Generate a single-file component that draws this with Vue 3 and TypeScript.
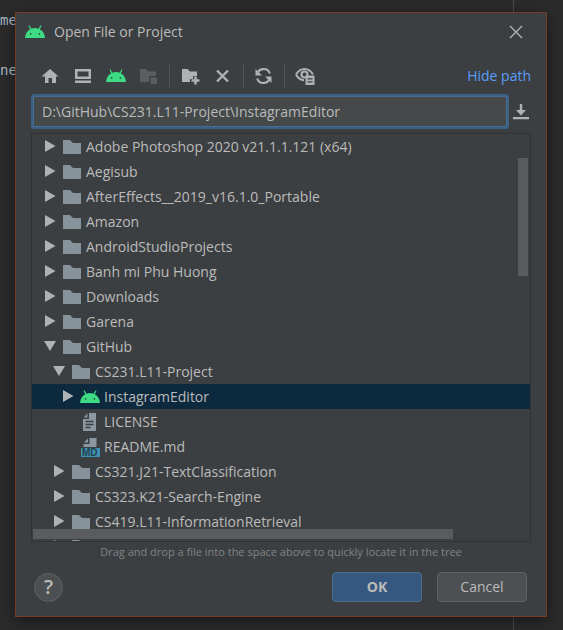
<script setup lang="ts">
import { ref } from 'vue'

type Kind = 'folder' | 'android' | 'text' | 'markdown'

interface Entry {
  name: string
  depth: number
  kind: Kind
  state?: 'open' | 'closed'
}

const path = ref('D:\\GitHub\\CS231.L11-Project\\InstagramEditor')
const selected = ref('InstagramEditor')

const folder = (name: string, depth = 0, state: 'open' | 'closed' = 'closed'): Entry => ({
  name,
  depth,
  kind: 'folder',
  state,
})

const entries: Entry[] = [
  folder('Adobe Photoshop 2020 v21.1.1.121 (x64)'),
  folder('Aegisub'),
  folder('AfterEffects__2019_v16.1.0_Portable'),
  folder('Amazon'),
  folder('AndroidStudioProjects'),
  folder('Banh mi Phu Huong'),
  folder('Downloads'),
  folder('Garena'),
  folder('GitHub', 0, 'open'),
  folder('CS231.L11-Project', 1, 'open'),
  { name: 'InstagramEditor', depth: 2, kind: 'android', state: 'closed' },
  { name: 'LICENSE', depth: 2, kind: 'text' },
  { name: 'README.md', depth: 2, kind: 'markdown' },
  folder('CS321.J21-TextClassification', 1),
  folder('CS323.K21-Search-Engine', 1),
  folder('CS419.L11-InformationRetrieval', 1),
  folder('', 1),
]
</script>

<template>
  <div class="desktop">
    <svg class="defs" aria-hidden="true">
      <symbol id="android" viewBox="0 0 20 14">
        <path d="M4.2 1 6 4.4M15.8 1 14 4.4" stroke="#3ddc84" stroke-width="1.2" stroke-linecap="round" />
        <path d="M0 13C.4 7.3 4.600 3 10 3s9.600 4.300 10 10z" fill="#3ddc84" />
        <circle cx="5.600" cy="8.800" r=".9" fill="#2b4a3b" />
        <circle cx="14.400" cy="8.800" r=".9" fill="#2b4a3b" />
      </symbol>
      <symbol id="folder" viewBox="0 0 18 15">
        <path d="M0 1h7l3 3h8v11H0z" fill="#87939a" />
      </symbol>
    </svg>

    <pre class="code">me

ne</pre>

    <main class="dialog" role="dialog" aria-labelledby="dialog-title">
      <header class="titlebar">
        <svg class="logo" width="20" height="14"><use href="#android" /></svg>
        <h1 id="dialog-title">Open File or Project</h1>
        <button class="close" type="button" aria-label="Close">
          <svg width="14" height="14" viewBox="0 0 14 14"><path d="m1 1 12 12M13 1 1 13" stroke="#b4b6b8" stroke-width="1.3" /></svg>
        </button>
      </header>

      <div class="toolbar">
        <button type="button" aria-label="Home">
          <svg width="20" height="20" viewBox="0 0 20 20"><path d="m10 3 8.500 7.500H16V17h-4v-5H8.500v5H5v-6.500H1.500z" fill="#afb1b3" /></svg>
        </button>
        <button type="button" aria-label="Desktop">
          <svg width="20" height="20" viewBox="0 0 20 20"><path fill-rule="evenodd" d="M2 3h16v10H2zm2.500 2.500v5h11v-5zM2 14.500h16V17H2z" fill="#afb1b3" /></svg>
        </button>
        <button type="button" aria-label="Project directory">
          <svg width="20" height="14"><use href="#android" /></svg>
        </button>
        <button type="button" aria-label="Module directory" disabled>
          <svg width="20" height="20" viewBox="0 0 20 20"><path d="M1 3h6l2.500 2.500H17V10h-7v6H1zM11.500 11.500H18V18h-6.500z" fill="#5b5d5f" /></svg>
        </button>
        <span class="separator"></span>
        <button type="button" aria-label="New folder">
          <svg width="20" height="20" viewBox="0 0 20 20"><path d="M2 3h5.500L10 5.500h7V10h-4v3h-3v3H2z" fill="#afb1b3" /><path d="M15.500 10.500v8M11.500 14.500h8" stroke="#afb1b3" stroke-width="2.500" /></svg>
        </button>
        <button type="button" aria-label="Delete">
          <svg width="20" height="20" viewBox="0 0 20 20"><path d="m4 4.500 11 11m0-11-11 11" stroke="#afb1b3" stroke-width="2.400" /></svg>
        </button>
        <span class="separator"></span>
        <button type="button" aria-label="Refresh">
          <svg width="20" height="20" viewBox="0 0 20 20"><path d="M3.200 8.500a6.500 6.500 0 0 1 12.600-1M15.800 11.500A6.500 6.500 0 0 1 3.200 12.500" fill="none" stroke="#afb1b3" stroke-width="2.200" /><path d="M1.500 3v6.500H8zM17.500 17v-6.500H11z" fill="#afb1b3" /></svg>
        </button>
        <span class="separator"></span>
        <button type="button" aria-label="Show hidden files">
          <svg width="20" height="20" viewBox="0 0 20 20"><path d="M1 8.500C3 5 6 3 9.500 3S16 5 18 8.500M1 8.500C2.800 12 5.500 14 9 14.200" fill="none" stroke="#afb1b3" stroke-width="2" /><circle cx="9.500" cy="8.500" r="3" fill="none" stroke="#afb1b3" stroke-width="2.200" /><path d="M10.500 9.500h9V19h-9z" fill="#afb1b3" /><path d="M12.500 12.800h5m-5 3h5" stroke="#3c3f41" stroke-width="1.300" /></svg>
        </button>
        <a class="hide-path" href="#path">Hide path</a>
      </div>

      <div class="path-row">
        <input id="path" v-model="path" type="text" aria-label="Path" spellcheck="false" />
        <button type="button" aria-label="Path history">
          <svg width="16" height="16" viewBox="0 0 16 16"><path d="M6.800 0h2.400v6H13l-5 5.500L3 6h3.800zM0 13h16v2.300H0z" fill="#afb1b3" /></svg>
        </button>
      </div>

      <section class="tree">
        <ul role="tree" aria-label="Files">
          <li
            v-for="entry in entries"
            :key="entry.name"
            role="treeitem"
            :class="['row', 'depth-' + entry.depth, { selected: entry.name === selected }]"
            :aria-selected="entry.name === selected"
            @click="selected = entry.name"
          >
            <span class="arrow">
              <svg v-if="entry.state === 'closed'" width="12" height="12" viewBox="0 0 12 12"><path d="M1 0 11.500 6 1 12z" fill="#afb1b3" /></svg>
              <svg v-else-if="entry.state === 'open'" width="12" height="12" viewBox="0 0 12 12"><path d="M0 1h12L6 11z" fill="#afb1b3" /></svg>
            </span>
            <span class="icon">
              <svg v-if="entry.kind === 'folder'" width="18" height="15"><use href="#folder" /></svg>
              <svg v-else-if="entry.kind === 'android'" width="20" height="14"><use href="#android" /></svg>
              <svg v-else-if="entry.kind === 'text'" width="20" height="18" viewBox="0 0 20 18">
                <path d="M9 0h7v18H3V6h6z" fill="#9aa7b0" opacity=".85" />
                <path d="M7.500.5V4.500H3.500z" fill="#9aa7b0" opacity=".85" />
                <path d="M5.500 8.500h8m-8 3h8m-8 3h5" stroke="#3c3f41" stroke-width="1.300" />
              </svg>
              <svg v-else width="20" height="20" viewBox="0 0 20 20">
                <path d="M9.500 1h7v9H3.500V7h6zM8 1.500v4H4z" fill="#9aa7b0" opacity=".85" />
                <path d="M1 11h19v9H1z" fill="#3e91b0" />
                <text x="2" y="19" class="badge">MD</text>
              </svg>
            </span>
            <span class="label">{{ entry.name }}</span>
          </li>
        </ul>
        <span class="thumb vertical"></span>
        <span class="thumb horizontal"></span>
      </section>

      <p class="hint">Drag and drop a file into the space above to quickly locate it in the tree</p>

      <footer class="actions">
        <button class="help" type="button" aria-label="Help">?</button>
        <button class="primary" type="button">OK</button>
        <button type="button">Cancel</button>
      </footer>
    </main>
  </div>
</template>

<style>
body {
  background: #2b2b2b;
}
</style>

<style scoped>
* {
  box-sizing: border-box;
}

.desktop {
  position: relative;
  display: flex;
  height: 100vh;
  min-height: 400px;
  padding: 12px 16px 13px 15px;
  overflow: hidden;
  background: linear-gradient(#4b4b4b, #4b4b4b) right 49px top / 1px 100% no-repeat #2b2b2b;
  color: #bbbbbb;
  font: 14px/20px "Open Sans", "Noto Sans", sans-serif;
}

.defs {
  position: absolute;
  width: 0;
  height: 0;
}

.code {
  position: absolute;
  left: 0;
  top: 8px;
  margin: 0;
  color: #a9b7c6;
  font: 14px/25px "DejaVu Sans Mono", monospace;
}

.dialog {
  position: relative;
  display: flex;
  flex: 1;
  flex-direction: column;
  min-width: 0;
  padding: 0 15px 14px;
  border: 1px solid #733d25;
  background: #3c3f41;
  box-shadow: 0 4px 14px rgba(0, 0, 0, 0.45);
}

button {
  display: flex;
  align-items: center;
  justify-content: center;
  padding: 0;
  border: 0;
  background: none;
  color: inherit;
  font: inherit;
}

svg {
  display: block;
  flex: none;
}

.titlebar {
  display: flex;
  align-items: center;
  height: 37px;
  padding: 0 8px 0 0;
}

.logo {
  margin: 0 9px 0 -6px;
}

h1 {
  margin: 0;
  font-size: 14px;
  font-weight: 400;
}

.close {
  width: 14px;
  height: 20px;
  margin-left: auto;
}

.toolbar {
  display: flex;
  align-items: center;
  gap: 13px;
  height: 44px;
  padding: 8px 0 0 9px;
}

.toolbar button {
  width: 20px;
  height: 20px;
}

.separator {
  width: 1px;
  height: 24px;
  margin: 0 -3px;
  background: #515456;
}

.hide-path {
  margin-left: auto;
  color: #589df6;
  text-decoration: none;
}

.path-row {
  display: flex;
  align-items: center;
  gap: 4px;
  margin: 0 2px 4px 0;
}

.path-row input {
  flex: 1;
  min-width: 0;
  height: 35px;
  padding: 0 8px;
  border: 3px solid #3d6185;
  border-radius: 3px;
  outline: 1px solid #466d94;
  outline-offset: -3px;
  background: #45494a;
  color: inherit;
  font: inherit;
}

.path-row button {
  width: 16px;
  height: 20px;
}

.tree {
  position: relative;
  flex: 1;
  min-height: 0;
  overflow: hidden;
  border: 1px solid #323334;
}

.tree ul {
  margin: 0;
  padding: 0;
  list-style: none;
}

.row {
  display: flex;
  align-items: center;
  height: 25px;
  padding-left: 12px;
  white-space: nowrap;
}

.depth-1 {
  padding-left: 21px;
}

.depth-2 {
  padding-left: 30px;
}

.selected {
  background: #0d293e;
}

.arrow {
  width: 12px;
  height: 14px;
}

.icon {
  display: flex;
  align-items: center;
  justify-content: center;
  width: 20px;
  margin: 0 4px 0 6px;
}

.badge {
  fill: #23414f;
  font: bold 10px "Liberation Sans", sans-serif;
}

.thumb {
  position: absolute;
  background: #5a5b5c;
}

.vertical {
  top: 24px;
  right: 2px;
  width: 10px;
  height: 118px;
}

.horizontal {
  right: 77px;
  bottom: 2px;
  left: 1px;
  height: 10px;
}

.hint {
  margin: 0;
  color: #808385;
  font-size: 11px;
  line-height: 20px;
  text-align: center;
}

.actions {
  display: flex;
  align-items: center;
  gap: 15px;
  margin-top: 10px;
  padding: 0 4px 0 3px;
}

.actions button {
  width: 90px;
  height: 30px;
  border: 1px solid #5e6163;
  border-radius: 4px;
  background: #4c5052;
}

.actions .primary {
  border-color: #4c708c;
  background: #365880;
  font-weight: 700;
}

.actions .help {
  width: 29px;
  height: 29px;
  margin-right: auto;
  border-radius: 50%;
  font-size: 20px;
  font-weight: 600;
}
</style>
